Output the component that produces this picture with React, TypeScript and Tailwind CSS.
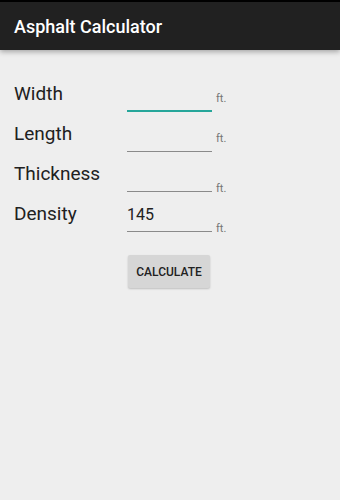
import React from 'react'

const font = { fontFamily: 'Roboto, "Noto Sans", sans-serif' }

type Row = { label: string; value?: string; focused?: boolean; ftLow?: boolean }

const rows: Row[] = [
  { label: 'Width', focused: true },
  { label: 'Length' },
  { label: 'Thickness', ftLow: true },
  { label: 'Density', value: '145', ftLow: true },
]

function FieldRow({ row }: { row: Row }) {
  return (
    <div className="flex h-[40px] items-start">
      <div className="mt-[10px] w-[113px] text-[19px] leading-[23px] text-[#212121]">{row.label}</div>
      <div
        className={`h-[40px] w-[85px] ${row.focused ? 'border-b-2 border-[#26a69a]' : 'border-b border-[#8a8a8a]'}`}
      >
        {row.value && <div className="pt-[13px] text-[16px] leading-[19px] text-[#212121]">{row.value}</div>}
      </div>
      <span
        className={`ml-[4px] self-end text-[11px] leading-[13px] text-[#757575] ${row.ftLow ? 'mb-[-3px]' : 'mb-[7px]'}`}
      >
        ft.
      </span>
    </div>
  )
}

export default function App() {
  return (
    <div className="min-h-[500px] w-[340px] bg-[#eeeeee]" style={font}>
      <div className="relative z-10 flex h-[50px] items-center border-t-2 border-black bg-[#212121] pl-[14px] shadow-[0_2px_5px_rgba(0,0,0,0.3)]">
        <span className="text-[18px] font-medium text-white">Asphalt Calculator</span>
      </div>
      <div className="pl-[14px] pt-[22px]">
        {rows.map((r) => (
          <FieldRow key={r.label} row={r} />
        ))}
        <div className="mt-[23px] pl-[114px]">
          <button className="h-[33px] w-[82px] rounded-[2px] bg-[#d6d6d6] text-[12px] font-medium text-[#212121] shadow-[0_1px_2px_rgba(0,0,0,0.2)]">
            CALCULATE
          </button>
        </div>
      </div>
    </div>
  )
}
